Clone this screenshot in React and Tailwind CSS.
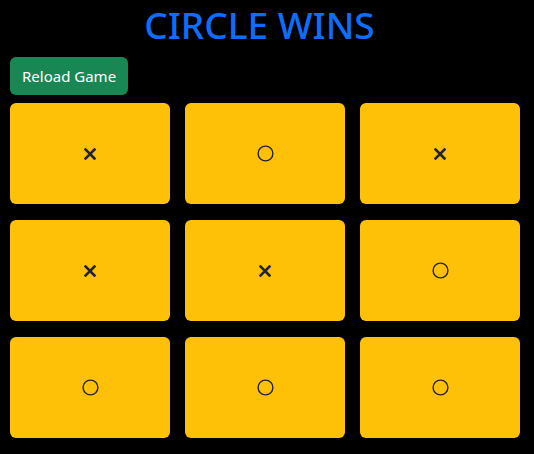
import React from "react";

const board = ["x", "o", "x", "x", "x", "o", "o", "o", "o"];

function Cross() {
  return (
    <svg width="12" height="12" viewBox="0 0 12 12" fill="none">
      <path d="M1.5 1.5L10.5 10.5M10.5 1.5L1.5 10.5" stroke="#212529" strokeWidth="2.6" strokeLinecap="square" />
    </svg>
  );
}

function Circle() {
  return (
    <svg width="17" height="17" viewBox="0 0 17 17" fill="none">
      <circle cx="8.5" cy="8.5" r="7.4" stroke="#212529" strokeWidth="1.4" />
    </svg>
  );
}

export default function App() {
  return (
    <div className="min-h-screen bg-black px-[10px] font-['Noto_Sans',sans-serif]">
      <div className="w-[510px]">
        <h1 className="pr-[11px] pt-[2px] text-center text-[37px] leading-[46px] font-medium text-[#0d6efd] mb-[9px]">
          CIRCLE WINS
        </h1>
        <button className="h-[38px] px-3 rounded-[6px] bg-[#198754] text-white text-[15px] mb-2">
          Reload Game
        </button>
        <div className="grid grid-cols-3 gap-x-[15px] gap-y-[16px]">
          {board.map((v, i) => (
            <div
              key={i}
              className="h-[101px] rounded-[6px] bg-[#ffc107] flex items-center justify-center"
            >
              {v === "x" ? <Cross /> : <Circle />}
            </div>
          ))}
        </div>
      </div>
    </div>
  );
}
